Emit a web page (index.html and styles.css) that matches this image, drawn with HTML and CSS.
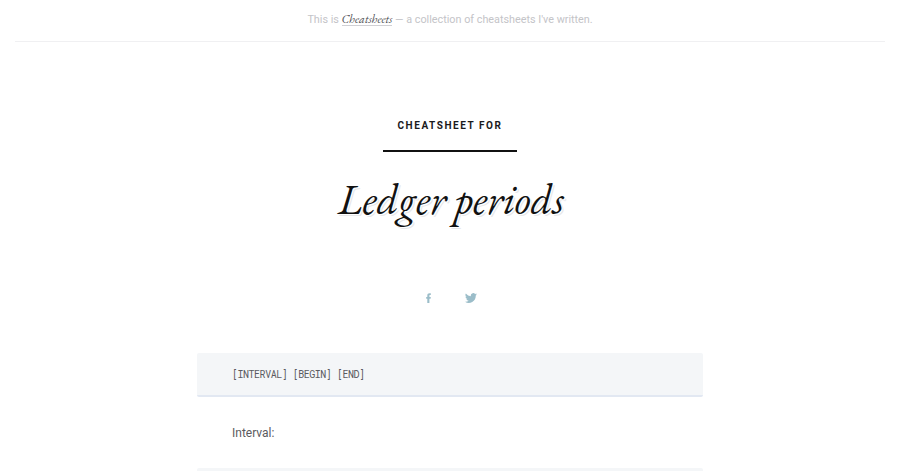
FILE: index.html
```html
<!DOCTYPE html>
<html lang="en">
<head>
<meta charset="utf-8">
<title>Ledger periods</title>
<link rel="stylesheet" href="styles.css">
</head>
<body>
<header class="notice">This is <a class="home">Cheatsheets</a> — a collection of cheatsheets I've written.</header>
<main>
<div class="heading">
<p class="prefix">Cheatsheet for</p>
<h1 class="title">Ledger periods</h1>
</div>
<nav class="social">
<svg class="icon" viewBox="0 0 12 12"><path d="M4.300 11V6.700H3.200V4.900H4.300V3.700C4.300 2.100 5.100 1.300 6.600 1.300H7.800V3.100H7.100C6.500 3.100 6.400 3.400 6.400 3.900V4.900H7.800L7.600 6.700H6.400V11Z"/></svg>
<svg class="icon" viewBox="0 0 24 24"><path d="M24 4.600a10 10 0 0 1-2.800.8 5 5 0 0 0 2.100-2.700c-1 .6-2 1-3.100 1.200a4.900 4.900 0 0 0-8.400 4.500A14 14 0 0 1 1.700 3.100a4.900 4.900 0 0 0 1.500 6.600c-.8 0-1.600-.2-2.200-.6a4.900 4.900 0 0 0 3.900 4.900c-.7.2-1.500.2-2.200.1a4.900 4.900 0 0 0 4.600 3.400A9.900 9.900 0 0 1 0 19.500 14 14 0 0 0 21.500 7.100 10 10 0 0 0 24 4.600Z"/></svg>
</nav>
<article class="content">
<pre class="code">[INTERVAL] [BEGIN] [END]</pre>
<p class="text">Interval:</p>
<pre class="code next"></pre>
</article>
</main>
</body>
</html>
```
FILE: styles.css
```css
* { box-sizing: border-box; }
body { margin: 0; background: #fff; font-family: Roboto, sans-serif; color: #5b5b60; }
.notice { height: 42px; margin: 0 15px; padding-top: 10px; border-bottom: 1px solid #f0f0f2; text-align: center; font-size: 10.800px; line-height: 20px; color: #c4c4c8; }
.home { display: inline-block; height: 13px; font: italic 12px/12px "EB Garamond", "Liberation Serif", serif; color: #505055; border-bottom: 1px solid #d0d0d4; }
.heading { display: flex; flex-direction: column; align-items: center; padding-top: 73px; }
.prefix { width: 134px; height: 37px; margin: 0; padding-top: 1px; border-bottom: 2px solid #111; text-align: center; text-transform: uppercase; font-size: 10px; line-height: 20px; font-weight: 700; letter-spacing: 1.550px; color: #1a1a1c; white-space: nowrap; }
.title { margin: 21px 0 0 2px; height: 61px; font: italic 42px/54px "EB Garamond", "Liberation Serif", serif; color: #111; text-shadow: 1px 1px 0 #fff, 2px 2px 0 #e8e8ea; }
.social { display: flex; justify-content: center; gap: 30px; margin-top: 57.500px; }
.icon { width: 12px; height: 12px; fill: #9bbdc9; }
.content { width: 506px; margin: 49.500px auto 0; }
.code { height: 44px; margin: 0; padding: 12px 35px 0; background: #f4f6f8; border-bottom: 2px solid #e2e8f2; border-radius: 2px; font: 10px/20px "Roboto Mono", "Noto Sans Mono", "DejaVu Sans Mono", monospace; letter-spacing: -.48px; }
.text { margin: 0; padding: 26px 35px; height: 71px; font-size: 12px; line-height: 20px; }
.next { height: 3px; padding: 0; border-bottom: 0; border-radius: 2px 2px 0 0; }
```
